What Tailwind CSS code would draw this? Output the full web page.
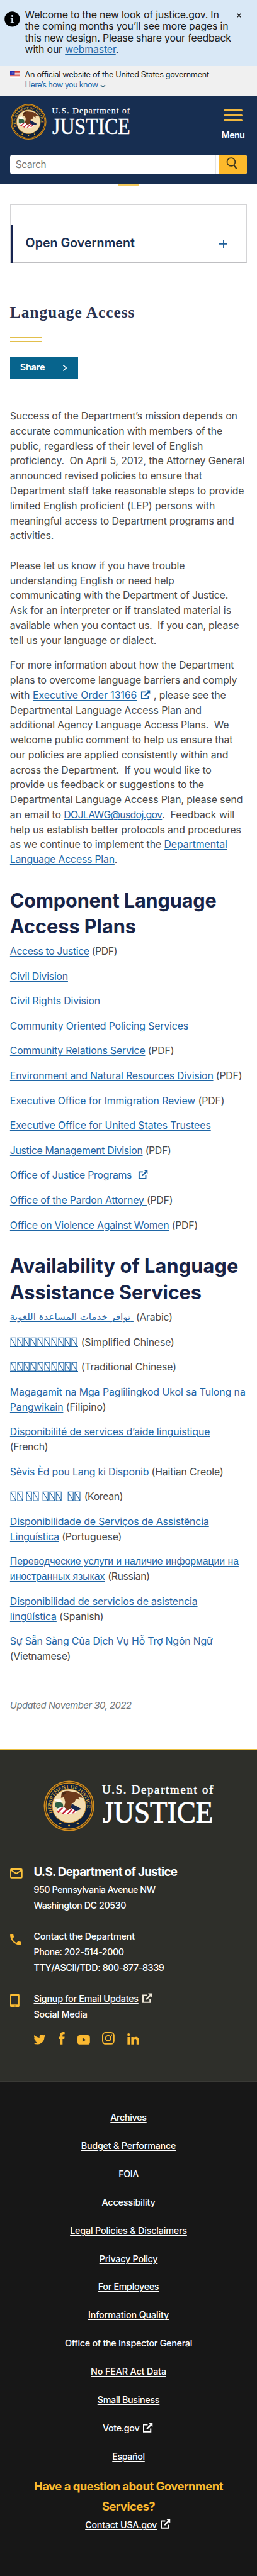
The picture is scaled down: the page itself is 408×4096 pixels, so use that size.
<!DOCTYPE html>
<html lang="en">
<head>
<meta charset="utf-8">
<title>Language Access</title>
<script src="https://cdn.jsdelivr.net/npm/@tailwindcss/browser@4"></script>
</head>
<body class="bg-white overflow-x-hidden">
<svg class="hidden" aria-hidden="true">
  <symbol id="seal" viewBox="0 0 82 82">
    <circle cx="41" cy="41" r="40.5" fill="#d18d1f"/>
    <circle cx="41" cy="41" r="38.2" fill="none" stroke="#4b3310" stroke-width="1.2"/>
    <circle cx="41" cy="41" r="36.3" fill="#10213a"/>
    <circle cx="41" cy="41" r="27" fill="#f2dcae" stroke="#c98a22" stroke-width="1"/>
    <path id="arc" d="M14.5 52A28.6 28.6 0 1 1 67.5 52" fill="none"/>
    <text font-family="Liberation Serif, serif" font-size="8.4" font-weight="700" fill="#c99a3a"><textPath href="#arc" textLength="104">DEPARTMENT OF JUSTICE</textPath></text>
    <g fill="#e0a92f"><circle cx="27" cy="69" r="1.6"/><circle cx="41" cy="72.5" r="1.6"/><circle cx="55" cy="69" r="1.6"/></g>
    <path d="M19 36l6-2 6 3 1 8-8 2-5-5z" fill="#2d5f45"/>
    <path d="M17 31l9-2 5 5-8 1z" fill="#fffaf0"/>
    <path d="M20 46l8-3h22l8 3-10 8H34z" fill="#fff"/>
    <path d="M22 50l7-6h3l-8 8zM29 53l9-9h3l-9 10zM37 54l9-10h3l-9 10zM45 53l7-8h3l-7 8z" fill="#c4283c"/>
    <path d="M45 37l16 9-9 3-8-5z" fill="#16264d"/>
    <path d="M29 21c3-4 9-5 15-3 9 0 16 4 19 10l-7-1 2 4-6-2-2 6-5 2-1 8-5 3-6-5 2-8-2-8-5 1z" fill="#6e3a1c"/>
    <path d="M29 21l5-3 2 3-4 3z" fill="#4a2814"/>
  </symbol>
  <symbol id="ext" viewBox="0 0 16 16">
    <path d="M8 3.4H1.9V14.1H12.6V9" fill="none" stroke="currentColor" stroke-width="1.9"/>
    <path d="M9.6.5H15.5V6.4L13.6 4.5 7.6 10.4 6 8.8 11.9 2.8z" fill="currentColor"/>
  </symbol>
  <symbol id="box" viewBox="0 0 11 16"><path d="M1.2 1.2H9.4V15.2H1.2zM1.2 1.2L9.4 15.2" fill="none" stroke="currentColor" stroke-width="1.1"/></symbol>
  <symbol id="box2" viewBox="0 0 22 16"><use href="#box" width="11" height="16"/><use href="#box" x="11" width="11" height="16"/></symbol>
</svg>

<div id="page" class="w-[412px] h-[4136px] [zoom:0.9903] overflow-hidden font-[Inter,sans-serif] text-[16px] text-[#4a4a4a] bg-white flex flex-col [&_a]:text-[#1f66a6] [&_a]:underline [&_a]:underline-offset-2 [&_a]:decoration-1">

  <!-- Notice -->
  <section class="h-[106px] shrink-0 bg-[#d9e8f6] flex pl-[7px] pt-[15.5px] text-[#1b1b1b]">
    <svg class="w-[25px] h-[25px] mt-[3px] shrink-0" viewBox="0 0 25 25"><circle cx="12.5" cy="12.5" r="12.3" fill="#000"/><circle cx="12.5" cy="7.6" r="1.5" fill="#d9e8f6"/><path d="M9.8 10.5h3.8v7h1.6v1.4H9.8v-1.4h1.6v-5.6H9.8z" fill="#d9e8f6"/></svg>
    <div class="ml-2 w-[332px] flex flex-col items-start leading-[18.33px] whitespace-pre [&>div]:h-[18.33px]">
      <div data-w="311">Welcome to the new look of justice.gov. In</div>
      <div data-w="326">the coming months you’ll see more pages in</div>
      <div data-w="330.5">this new design. Please share your feedback</div>
      <div data-w="150">with our <a>webmaster</a>.</div>
    </div>
    <svg class="w-[7px] h-[7px] ml-2 mt-[5.5px]" viewBox="0 0 7 7"><path d="M.7.7l5.6 5.6M6.3.7L.7 6.3" stroke="#222" stroke-width="1.6"/></svg>
  </section>

  <!-- Government banner -->
  <section class="h-[48px] shrink-0 bg-[#f0f0f0] flex pl-4 pt-[6px] text-[12.8px] text-[#1b1b1b]">
    <svg class="w-4 h-[11px] mt-[2px]" viewBox="0 0 16 11"><path fill="#fff" d="M0 0h16v11H0z"/><path d="M0 .6h16M0 2.8h16M0 5h16M0 7.2h16M0 9.4h16" stroke="#d2403a" stroke-width="1.1"/><path fill="#2a2fb0" d="M0 0h7.5v6H0z"/><path d="M1 1.5h6M1 3h6M1 4.5h6" stroke="#fff" stroke-width=".7" stroke-dasharray=".8 1"/></svg>
    <div class="ml-2 flex flex-col items-start whitespace-pre leading-[16.2px] [&>div]:h-[16.2px]">
      <div data-w="295">An official website of the United States government</div>
      <div class="flex items-center gap-1"><a data-w="117">Here’s how you know</a><svg class="w-[9px] h-[6px] mt-1" viewBox="0 0 9 6"><path d="M1 1l3.5 3.5L8 1" fill="none" stroke="#33657d" stroke-width="1.5"/></svg></div>
    </div>
  </section>

  <!-- Header -->
  <header class="h-[142px] shrink-0 bg-[#172e51] px-4 flex flex-col">
    <div class="h-[79px] shrink-0 border-b border-[#5b6c88] flex pt-[13px]">
      <svg class="w-[59px] h-[58px]"><use href="#seal"/></svg>
      <svg class="w-[130px] h-[58px] ml-2 overflow-visible" viewBox="0 0 130 58" font-family="Liberation Serif, serif" fill="#fff" stroke="#fff">
        <text x="0.5" y="15.5" font-size="13.4" stroke-width=".3" textLength="125">U.S. Department of</text>
        <text x="1" y="48" font-size="36.5" stroke-width=".5" textLength="125" lengthAdjust="spacingAndGlyphs">JUSTICE</text>
      </svg>
      <div class="ml-auto mr-[4px] flex flex-col items-center pt-[9px]">
        <div class="w-[30px] flex flex-col gap-[5px] [&>i]:h-[3px] [&>i]:rounded-full [&>i]:bg-[#f0b73f]"><i></i><i></i><i></i></div>
        <div data-w="37" class="mt-[12px] text-[14.5px] leading-5 font-semibold text-white">Menu</div>
      </div>
    </div>
    <div class="mt-[15px] h-8 flex rounded-[4px] overflow-hidden bg-white">
      <div class="w-[330px] border-r border-[#e4e4e4] pl-[9px] text-[15.5px] leading-[33px] text-[#757575] whitespace-pre"><span data-w="49" class="inline-block">Search</span></div>
      <div class="w-[5px]"></div>
      <div class="flex-1 bg-[#fdb92b] flex justify-center items-center"><svg class="w-[18px] h-[20px] mr-1 mb-1" viewBox="0 0 18 20"><circle cx="8" cy="7.6" r="6.5" fill="none" stroke="#3b341f" stroke-width="1.7"/><path d="M12.3 12.6L16.6 18.4" stroke="#3b341f" stroke-width="2.2"/></svg></div>
    </div>
  </header>

  <div class="h-[32px] shrink-0 flex justify-center"><div class="w-[34px] h-[1.5px] bg-[#f3c95b]"></div></div>

  <!-- Section menu -->
  <div class="ml-4 w-[380px] h-[94px] shrink-0 border border-[#d4d4d6] border-b-2 border-b-[#bfbfc2] flex pt-[32px]">
    <div class="w-[4px] h-[61px] bg-[#172450] shrink-0"></div>
    <div class="ml-[20px] flex-1 flex justify-between items-center pr-[30px] h-[60px]">
      <div data-w="175" class="text-[19.8px] leading-7 font-semibold text-[#172e51] whitespace-pre">Open Government</div>
      <svg class="w-[14px] h-[14px] mt-[2px]" viewBox="0 0 14 14"><path d="M7 0v14M0 7h14" stroke="#1f5f99" stroke-width="1.8"/></svg>
    </div>
  </div>

  <main class="px-4 h-[2386px] shrink-0 flex flex-col items-start">
    <h1 data-w="200.5" class="mt-[62px] h-[36px] leading-[36px] font-['Liberation_Serif',serif] font-bold text-[25.5px] text-[#2a3352] whitespace-pre">Language Access</h1>
    <div class="mt-[21px] w-[52px] h-2 border-y-2 border-[#e2bf4c] shrink-0"></div>
    <div class="mt-[24px] w-[109px] h-[36px] shrink-0 bg-[#07648d] text-white flex items-center pl-4">
      <span data-w="40" class="text-[14.8px] font-semibold">Share</span>
      <i class="ml-4 h-[34px] w-px bg-white"></i>
      <svg class="ml-[11px] w-[8px] h-[10px]" viewBox="0 0 8 10"><path d="M1.3.6L6.3 5l-5 4.4" fill="none" stroke="#fff" stroke-width="1.6"/></svg>
    </div>

    <div class="mt-[47.6px] flex flex-col gap-6 whitespace-pre leading-6 [&>div>*]:h-6">
      <div class="flex flex-col items-start">
        <div data-w="364.3">Success of the Department’s mission depends on</div>
        <div data-w="340.6">accurate communication with members of the</div>
        <div data-w="309.6">public, regardless of their level of English</div>
        <div data-w="376">proficiency.  On April 5, 2012, the Attorney General</div>
        <div data-w="308">announced revised policies to ensure that</div>
        <div data-w="375.3">Department staff take reasonable steps to provide</div>
        <div data-w="328.6">limited English proficient (LEP) persons with</div>
        <div data-w="359.3">meaningful access to Department programs and</div>
        <div data-w="70">activities.</div>
      </div>
      <div class="flex flex-col items-start">
        <div data-w="280.3">Please let us know if you have trouble</div>
        <div data-w="263.3">understanding English or need help</div>
        <div data-w="349.6">communicating with the Department of Justice.</div>
        <div data-w="354.6">Ask for an interpreter or if translated material is</div>
        <div data-w="367.3">available when you contact us.  If you can, please</div>
        <div data-w="234.6">tell us your language or dialect.</div>
      </div>
    </div>
    <div class="mt-4 flex flex-col items-start whitespace-pre leading-6 [&>*]:h-6">
      <div data-w="359">For more information about how the Department</div>
      <div data-w="364">plans to overcome language barriers and comply</div>
      <div class="flex"><span data-w="36.5">with </span><a data-w="167">Executive Order 13166</a><svg class="w-4 h-4 ml-[6px] mt-[3px] mr-[5px] text-[#1b62a3]"><use href="#ext"/></svg><span data-w="115.5">, please see the</span></div>
      <div data-w="307">Departmental Language Access Plan and</div>
      <div data-w="351">additional Agency Language Access Plans.  We</div>
      <div data-w="357">welcome public comment to help us ensure that</div>
      <div data-w="350">our policies are applied consistently within and</div>
      <div data-w="323">across the Department.  If you would like to</div>
      <div data-w="311">provide us feedback or suggestions to the</div>
      <div data-w="373">Departmental Language Access Plan, please send</div>
      <div class="flex"><span data-w="86.3">an email to </span><a data-w="157.5">DOJLAWG@usdoj.gov</a><span data-w="116">.  Feedback will</span></div>
      <div data-w="370.6">help us establish better protocols and procedures</div>
      <div data-w="348.3">as we continue to implement the <a>Departmental</a></div>
      <div data-w="172"><a>Language Access Plan</a>.</div>
    </div>

    <h2 class="mt-8 flex flex-col items-start whitespace-pre text-[31px] leading-[42px] font-bold text-[#172448]">
      <span data-w="331">Component Language</span>
      <span data-w="202">Access Plans</span>
    </h2>
    <div class="mt-[7.2px] flex flex-col items-start gap-4 whitespace-pre leading-6 [&>*]:h-6">
      <div data-w="172"><a>Access to Justice</a> (PDF)</div>
      <div data-w="93"><a>Civil Division</a></div>
      <div data-w="144.6"><a>Civil Rights Division</a></div>
      <div data-w="286"><a>Community Oriented Policing Services</a></div>
      <div data-w="263"><a>Community Relations Service</a> (PDF)</div>
      <div data-w="372"><a>Environment and Natural Resources Division</a> (PDF)</div>
      <div data-w="344"><a>Executive Office for Immigration Review</a> (PDF)</div>
      <div data-w="322"><a>Executive Office for United States Trustees</a></div>
      <div data-w="258"><a>Justice Management Division</a> (PDF)</div>
      <div class="flex"><a data-w="199.5">Office of Justice Programs </a><svg class="w-4 h-4 ml-[6px] mt-[3px] text-[#1b62a3]"><use href="#ext"/></svg></div>
      <div data-w="261"><a>Office of the Pardon Attorney </a>(PDF)</div>
      <div data-w="301"><a>Office on Violence Against Women</a> (PDF)</div>
    </div>

    <h2 class="mt-8 flex flex-col items-start whitespace-pre text-[31px] leading-[42px] font-bold text-[#172448]">
      <span data-w="366">Availability of Language</span>
      <span data-w="307">Assistance Services</span>
    </h2>
    <div class="mt-2 flex flex-col items-start gap-4 whitespace-pre leading-6 [&>div>*]:h-6 [&>div]:flex [&>div]:flex-col [&>div]:items-start">
      <div><div class="flex"><a class="w-[202px] text-[15.2px] font-['DejaVu_Sans',sans-serif]">توافر خدمات المساعدة اللغوية </a><span data-w="58.5">(Arabic)</span></div></div>
      <div><div class="flex"><a class="flex w-[109px] border-b border-[#1b62a3] h-[19px]! mr-[5px]"><svg class="w-[22px] h-4 mt-[3px]"><use href="#box2"/></svg><svg class="w-[22px] h-4 mt-[3px]"><use href="#box2"/></svg><svg class="w-[22px] h-4 mt-[3px]"><use href="#box2"/></svg><svg class="w-[22px] h-4 mt-[3px]"><use href="#box2"/></svg><svg class="w-[22px] h-4 mt-[3px]"><use href="#box2"/></svg></a><span data-w="149.5">(Simplified Chinese)</span></div></div>
      <div><div class="flex"><a class="flex w-[109px] border-b border-[#1b62a3] h-[19px]! mr-[5px]"><svg class="w-[22px] h-4 mt-[3px]"><use href="#box2"/></svg><svg class="w-[22px] h-4 mt-[3px]"><use href="#box2"/></svg><svg class="w-[22px] h-4 mt-[3px]"><use href="#box2"/></svg><svg class="w-[22px] h-4 mt-[3px]"><use href="#box2"/></svg><svg class="w-[22px] h-4 mt-[3px]"><use href="#box2"/></svg></a><span data-w="152.5">(Traditional Chinese)</span></div></div>
      <div><div data-w="377.6"><a>Magagamit na Mga Paglilingkod Ukol sa Tulong na</a></div><div data-w="154"><a>Pangwikain</a> (Filipino)</div></div>
      <div><div data-w="320.6"><a>Disponibilité de services d’aide linguistique</a></div><div data-w="61">(French)</div></div>
      <div><div data-w="342"><a>Sèvis Èd pou Lang ki Disponib</a> (Haitian Creole)</div></div>
      <div><div class="flex"><a class="flex w-[114px] border-b border-[#1b62a3] h-[19px]! mr-[5px]"><svg class="w-[22px] h-4 mt-[3px]"><use href="#box2"/></svg><svg class="w-[22px] h-4 mt-[3px] ml-1"><use href="#box2"/></svg><svg class="w-[22px] h-4 mt-[3px] ml-1"><use href="#box2"/></svg><svg class="w-[11px] h-4 mt-[3px]"><use href="#box"/></svg><svg class="w-[22px] h-4 mt-[3px] ml-2"><use href="#box2"/></svg></a><span data-w="62">(Korean)</span></div></div>
      <div><div data-w="319"><a>Disponibilidade de Serviços de Assistência</a></div><div data-w="179"><a>Linguística</a> (Portuguese)</div></div>
      <div><div data-w="366.6" class="font-['Liberation_Sans',sans-serif]"><a>Переводческие услуги и наличие информации на</a></div><div class="flex"><a data-w="152" class="font-['Liberation_Sans',sans-serif]">иностранных языках</a><span data-w="67" class="ml-[5px]">(Russian)</span></div></div>
      <div><div data-w="300.6"><a>Disponibilidad de servicios de asistencia</a></div><div data-w="150"><a>lingüística</a> (Spanish)</div></div>
      <div><div data-w="325"><a>Sự Sẵn Sàng Của Dịch Vụ Hỗ Trợ Ngôn Ngữ</a></div><div data-w="97">(Vietnamese)</div></div>
    </div>
    <div data-w="194.6" class="mt-[56px] text-[15px] leading-6 italic text-[#71767a] whitespace-pre">Updated November 30, 2022</div>
  </main>

  <!-- Footer -->
  <footer class="shrink-0 h-[533px] bg-[#2e2f2a] border-t-[3px] border-[#e9be3f] flex flex-col text-white [&_a]:text-white! text-[14.5px] font-medium">
    <div class="mt-[49px] ml-[70px] flex shrink-0">
      <svg class="w-[82px] h-[82px]"><use href="#seal"/></svg>
      <svg class="w-[190px] h-[82px] ml-[11px] overflow-visible" viewBox="0 0 190 82" font-family="Liberation Serif, serif" fill="#fff" stroke="#fff">
        <text x="1" y="21.5" font-size="19" stroke-width=".5" textLength="178">U.S. Department of</text>
        <text x="2" y="67.6" font-size="49.8" stroke-width=".9" textLength="177" lengthAdjust="spacingAndGlyphs">JUSTICE</text>
      </svg>
    </div>
    <div class="mt-[51.5px] flex pl-4 h-[80px] shrink-0">
      <svg class="w-5 h-4 mt-2 shrink-0" viewBox="0 0 20 16"><rect x="1" y="1" width="18" height="14" rx="1.2" fill="none" stroke="#fbc33c" stroke-width="1.9"/><path d="M2 3l8 5.2L18 3" fill="none" stroke="#fbc33c" stroke-width="1.8"/></svg>
      <div class="ml-[18px] flex flex-col items-start whitespace-pre leading-[25px]">
        <div data-w="230" class="text-[19px] leading-7 h-[30px] font-bold">U.S. Department of Justice</div>
        <div data-w="195">950 Pennsylvania Avenue NW</div>
        <div data-w="148">Washington DC 20530</div>
      </div>
    </div>
    <div class="mt-[25px] flex pl-4 h-[75px] shrink-0">
      <svg class="w-[18px] h-[18px] mt-2 shrink-0" viewBox="3 3 18 18"><path fill="#fbb931" d="M6.62 10.79c1.44 2.83 3.76 5.14 6.59 6.59l2.2-2.2c.27-.27.67-.36 1.02-.24 1.12.37 2.33.57 3.57.57.55 0 1 .45 1 1V20c0 .55-.45 1-1 1C10.61 21 3 13.39 3 4c0-.55.45-1 1-1h3.5c.55 0 1 .45 1 1 0 1.25.2 2.45.57 3.57.11.35.03.74-.25 1.02l-2.2 2.2z"/></svg>
      <div class="ml-[20px] flex flex-col items-start whitespace-pre leading-[25px]">
        <a data-w="162">Contact the Department</a>
        <div data-w="144.5">Phone: 202-514-2000</div>
        <div data-w="209">TTY/ASCII/TDD: 800-877-8339</div>
      </div>
    </div>
    <div class="mt-[25px] flex pl-4 shrink-0">
      <svg class="w-[15px] h-[22px] mt-1 shrink-0" viewBox="0 0 15 22"><path fill-rule="evenodd" fill="#fbbd33" d="M2.5 0h10A2.5 2.5 0 0 1 15 2.5v17a2.5 2.5 0 0 1-2.5 2.5h-10A2.5 2.5 0 0 1 0 19.5v-17A2.5 2.5 0 0 1 2.5 0zM2 4v13.3h11V4zM6 19v1.4h3V19z"/></svg>
      <div class="ml-[23px] flex flex-col items-start whitespace-pre leading-[25px]">
        <div class="flex h-[25px]"><a data-w="168">Signup for Email Updates</a><svg class="w-[17px] h-[17px] ml-[5px] mt-[3px] text-[#eee8d8]"><use href="#ext"/></svg></div>
        <a data-w="86">Social Media</a>
        <div class="mt-[15px] h-5 flex items-end text-[#fbb931]">
          <svg class="w-5 h-4" viewBox="0 0 24 20" fill="currentColor"><path d="M24 2.4c-.9.4-1.8.7-2.8.8 1-.6 1.8-1.6 2.2-2.7-1 .6-2 1-3.1 1.2A4.900 4.900 0 0 0 11.900 6.200C7.800 6 4.200 4 1.700.9a4.900 4.900 0 0 0 1.500 6.600c-.8 0-1.600-.2-2.200-.6v.1c0 2.400 1.700 4.400 3.900 4.800-.7.200-1.500.2-2.200.1.600 2 2.400 3.400 4.600 3.400A9.900 9.900 0 0 1 0 17.300 14 14 0 0 0 21.500 4.900c1-.7 1.800-1.500 2.500-2.500z"/></svg>
          <svg class="w-[10px] h-5 ml-5" viewBox="0 0 10 20" fill="currentColor"><path d="M2.5 20V11.2H0V7.6h2.5V5C2.5 1.8 4.3 0 7.2 0c1.3 0 2.6.2 2.6.2v3.2H8.2c-1.4 0-1.8.8-1.8 1.700v2.500h3.300l-.5 3.600H6.400V20z"/></svg>
          <svg class="w-5 h-[15px] ml-5" viewBox="0 0 20 15"><rect width="20" height="15" rx="4" fill="currentColor"/><path d="M8 4.200l5.500 3.300L8 10.800z" fill="#2e2f2a"/></svg>
          <svg class="w-5 h-5 ml-5" viewBox="0 0 20 20" fill="none" stroke="currentColor" stroke-width="2"><rect x="1" y="1" width="18" height="18" rx="4.5"/><circle cx="10" cy="10" r="4.2"/><circle cx="15.2" cy="4.8" r=".5" stroke-width="1.4"/></svg>
          <svg class="w-[19px] h-[18px] ml-5" viewBox="0 0 19 18" fill="currentColor"><circle cx="2.2" cy="2.2" r="2.1"/><path d="M.4 6h3.7v12H.4zM6.5 6H10v1.700c.6-1.100 1.900-2 3.800-2 4 0 4.900 2.500 4.900 5.800V18h-3.800v-5.900c0-1.400-.1-3.100-2-3.100s-2.600 1.500-2.600 3V18H6.500z"/></svg>
        </div>
      </div>
    </div>
  </footer>
  <div class="flex-1 bg-[#171717] border-t border-[#3a3a36] pt-[36px] flex flex-col items-center text-white [&_a]:text-white! text-[14.5px] font-medium whitespace-pre">
    <div class="flex flex-col items-center leading-[45.33px] [&>*]:h-[45.33px]">
      <a data-w="58">Archives</a>
      <a data-w="152">Budget &amp; Performance</a>
      <a data-w="32">FOIA</a>
      <a data-w="86">Accessibility</a>
      <a data-w="187.5">Legal Policies &amp; Disclaimers</a>
      <a data-w="93.5">Privacy Policy</a>
      <a data-w="97.5">For Employees</a>
      <a data-w="129.5">Information Quality</a>
      <a data-w="204">Office of the Inspector General</a>
      <a data-w="121">No FEAR Act Data</a>
      <a data-w="99.5">Small Business</a>
      <div class="flex"><a data-w="59">Vote.gov</a><svg class="w-[17px] h-[17px] ml-[5px] mr-[2px] mt-[13px]"><use href="#ext"/></svg></div>
      <a data-w="52">Español</a>
    </div>
    <div class="mt-[10px] flex flex-col items-center text-[18.7px] leading-[31.7px] font-bold text-[#fcba2f]">
      <span data-w="303">Have a question about Government</span>
      <span data-w="85">Services?</span>
    </div>
    <div class="mt-[2px] flex leading-6"><a data-w="115">Contact USA.gov</a><svg class="w-[17px] h-[17px] ml-[5px] mr-[2px] mt-[2px]"><use href="#ext"/></svg></div>
  </div>
</div>
<script>
  // Track each line so that it sets to its measure (data-w, in page units).
  const page = document.getElementById('page');
  function fit() {
    if (getComputedStyle(page).display !== 'flex') return;
    const lines = [...document.querySelectorAll('[data-w]')];
    lines.forEach(el => { el.style.letterSpacing = '0px'; el.style.width = 'max-content'; });
    const scale = page.getBoundingClientRect().width / 412;
    const widths = lines.map(el => el.getBoundingClientRect().width / scale);
    lines.forEach((el, i) => {
      el.style.letterSpacing = (el.dataset.w - widths[i]) / el.textContent.length + 'px';
    });
  }
  new ResizeObserver(fit).observe(page);
  addEventListener('load', fit);
  document.fonts.ready.then(fit);
</script>
</body>
</html>
